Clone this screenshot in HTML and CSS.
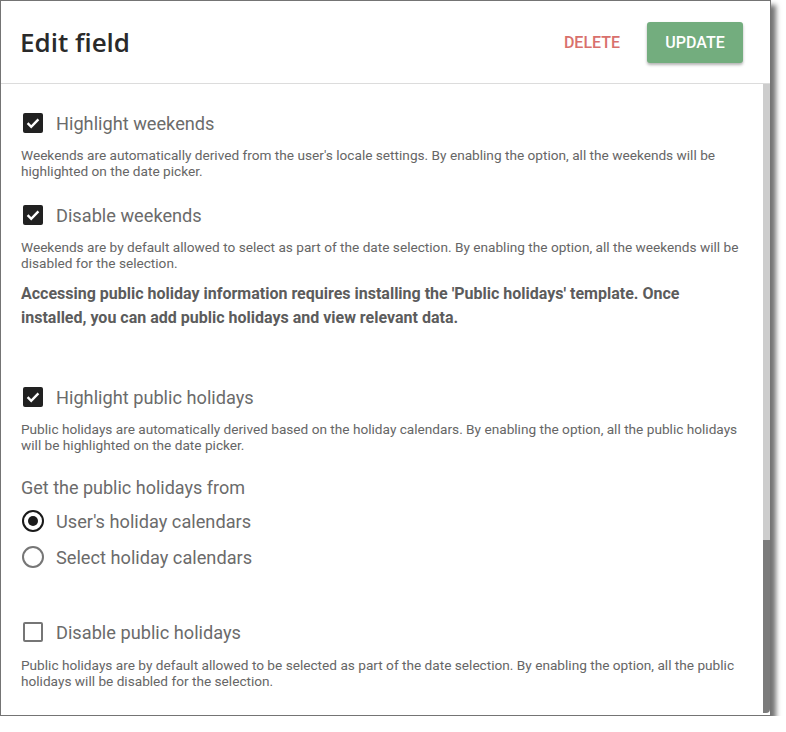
FILE: index.html
```html
<!DOCTYPE html>
<html lang="en">
<head>
<meta charset="utf-8">
<title>Edit field</title>
<link rel="stylesheet" href="styles.css">
</head>
<body>
<div class="window">
  <header class="header">
    <h1 class="title">Edit field</h1>
    <div class="actions">
      <button class="btn-delete">Delete</button>
      <button class="btn-update">Update</button>
    </div>
  </header>
  <div class="body">
    <div class="content">
      <label class="row row-first">
        <span class="check checked"><svg viewBox="0 0 20 20" width="20" height="20"><path d="M4.6 10.2l3.6 3.6 7.2-7.4" fill="none" stroke="#fff" stroke-width="2.4"/></svg></span>
        <span class="label">Highlight weekends</span>
      </label>
      <p class="desc">Weekends are automatically derived from the user's locale settings. By enabling the option, all the weekends will be highlighted on the date picker.</p>

      <label class="row row-next">
        <span class="check checked"><svg viewBox="0 0 20 20" width="20" height="20"><path d="M4.6 10.2l3.6 3.6 7.2-7.4" fill="none" stroke="#fff" stroke-width="2.4"/></svg></span>
        <span class="label">Disable weekends</span>
      </label>
      <p class="desc">Weekends are by default allowed to select as part of the date selection. By enabling the option, all the weekends will be disabled for the selection.</p>

      <p class="notice">Accessing public holiday information requires installing the 'Public holidays' template. Once installed, you can add public holidays and view relevant data.</p>

      <label class="row row-section">
        <span class="check checked"><svg viewBox="0 0 20 20" width="20" height="20"><path d="M4.6 10.2l3.6 3.6 7.2-7.4" fill="none" stroke="#fff" stroke-width="2.4"/></svg></span>
        <span class="label">Highlight public holidays</span>
      </label>
      <p class="desc">Public holidays are automatically derived based on the holiday calendars. By enabling the option, all the public holidays will be highlighted on the date picker.</p>

      <div class="group-title">Get the public holidays from</div>
      <label class="radio-row">
        <span class="radio on"></span>
        <span class="label">User's holiday calendars</span>
      </label>
      <label class="radio-row">
        <span class="radio"></span>
        <span class="label">Select holiday calendars</span>
      </label>

      <label class="row row-last">
        <span class="check"></span>
        <span class="label">Disable public holidays</span>
      </label>
      <p class="desc">Public holidays are by default allowed to be selected as part of the date selection. By enabling the option, all the public holidays will be disabled for the selection.</p>
    </div>
    <div class="scrollbar">
      <div class="thumb"></div>
      <div class="track"></div>
    </div>
  </div>
</div>
</body>
</html>
```

FILE: styles.css
```css
html, body {
  margin: 0;
  padding: 0;
  background: #fff;
}

body {
  font-family: Roboto, "Liberation Sans", sans-serif;
}

.window {
  position: relative;
  box-sizing: border-box;
  width: 771px;
  height: 716px;
  border: 1px solid #747474;
  background: #fff;
  box-shadow: 5px 5px 5px rgba(0, 0, 0, 0.55);
  display: flex;
  flex-direction: column;
  overflow: hidden;
}

.window::before {
  content: "";
  position: absolute;
  left: -1px;
  top: -1px;
  width: 118px;
  height: 1px;
  background: repeating-linear-gradient(90deg, #555 0 4px, #c8c8c8 4px 6px);
}

.header {
  height: 82px;
  flex: none;
  border-bottom: 1px solid #dcdcdc;
  display: flex;
  align-items: center;
  justify-content: space-between;
  padding: 0 27px 0 19px;
}

.title {
  margin: 0;
  font-family: "Open Sans", "Noto Sans", sans-serif;
  font-weight: 600;
  font-size: 26px;
  color: #2a2a2a;
  letter-spacing: 0;
}

.actions {
  display: flex;
  align-items: center;
  gap: 11px;
}

.btn-delete,
.btn-update {
  font-family: Roboto, "Liberation Sans", sans-serif;
  font-weight: 500;
  font-size: 16px;
  text-transform: uppercase;
  border: none;
  cursor: pointer;
  height: 41px;
  padding: 0 16px;
  border-radius: 3px;
}

.btn-delete {
  background: transparent;
  color: #d9706c;
}

.btn-update {
  background: #73ad7e;
  color: #fff;
  width: 96px;
  padding: 0;
  box-shadow: 0 2px 3px rgba(0, 0, 0, 0.3);
}

.body {
  flex: 1;
  display: flex;
  min-height: 0;
}

.content {
  flex: 1;
  padding: 25px 20px 0 19px;
  overflow: hidden;
  color: #666;
}

.scrollbar {
  width: 7px;
  flex: none;
  display: flex;
  flex-direction: column;
}

.thumb {
  height: 456px;
  background: #cdcdcd;
}

.track {
  flex: 1;
  margin-bottom: 2px;
  background: #7b7b7b;
  border-bottom-right-radius: 4px;
}

.row {
  display: flex;
  align-items: center;
  height: 28px;
  gap: 13px;
  padding-left: 3px;
}

.row-next { margin-top: 22px; }
.row-section { margin-top: 53px; }
.row-last { margin-top: 43px; }

.check {
  box-sizing: border-box;
  width: 20px;
  height: 20px;
  border-radius: 2px;
  border: 2px solid #767676;
  flex: none;
  display: flex;
}

.check.checked {
  background: #212121;
  border: none;
}

.label {
  font-size: 18.2px;
  color: #6b6b6b;
}

.desc {
  margin: 10px 0 0 1px;
  font-size: 13.65px;
  line-height: 16px;
  color: #666;
}

.row-last + .desc { margin-top: 11px; }

.notice {
  margin: 11px 0 0 1px;
  font-size: 16px;
  font-weight: 700;
  line-height: 24px;
  color: #5c5c5c;
}

.group-title {
  margin: 23px 0 0 1px;
  font-size: 18px;
  line-height: 24px;
  color: #6b6b6b;
}

.radio-row {
  display: flex;
  align-items: center;
  height: 36px;
  gap: 12px;
  padding-left: 2px;
}

.group-title + .radio-row { margin-top: 3px; }

.radio {
  box-sizing: border-box;
  width: 22px;
  height: 22px;
  border-radius: 50%;
  border: 2px solid #767676;
  flex: none;
  display: flex;
  align-items: center;
  justify-content: center;
}

.radio.on {
  border: 2.5px solid #1a1a1a;
}

.radio.on::after {
  content: "";
  width: 10px;
  height: 10px;
  border-radius: 50%;
  background: #1a1a1a;
}
```
